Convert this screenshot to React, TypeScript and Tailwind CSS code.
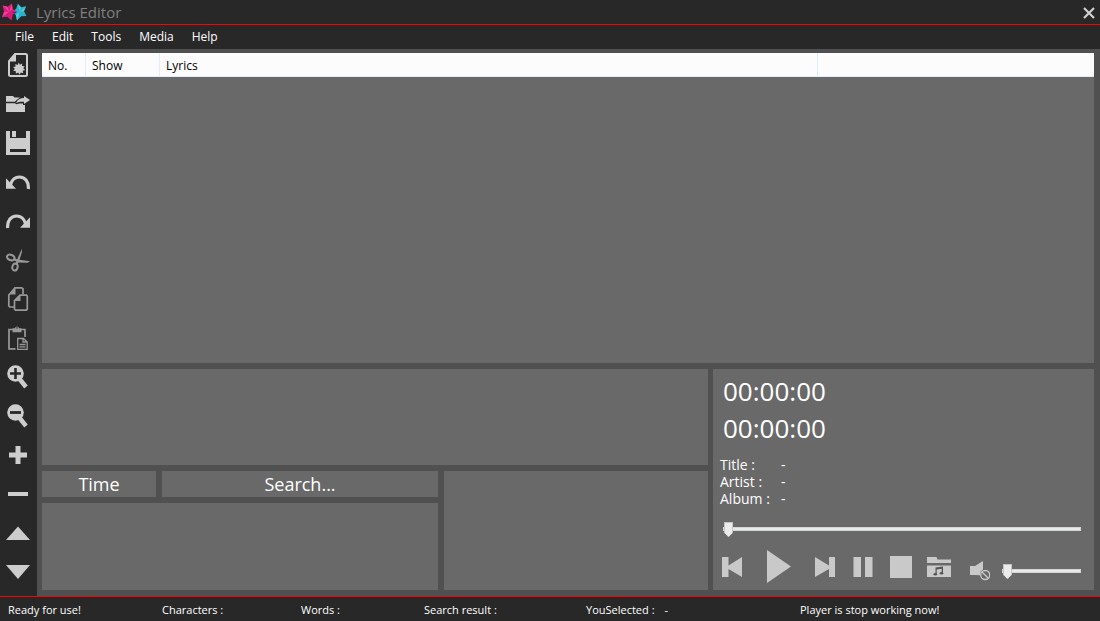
import { useState } from 'react';
import type { ReactNode } from 'react';

const menus = ['File', 'Edit', 'Tools', 'Media', 'Help'];

const NewIcon = () => (
  <>
    <path d="M9 1h10.500A1.500 1.500 0 0 1 21 2.500v19a1.500 1.500 0 0 1-1.500 1.500h-15A1.500 1.500 0 0 1 3 21.500V8z" fill="none" stroke="currentColor" strokeWidth="2" />
    <path d="M10 0v8.500H2.500z" />
    <path d="M12.800 9.500l1.100 2.200 2.300-1.300-.2 2.600 2.800.2-1.600 2.100 2 1.700-2.500.8.6 2.500-2.500-.8-1.200 2.200-1.500-2.100-2.300 1.100.1-2.500-2.700-.4 1.700-1.900-1.800-1.900 2.600-.5-.5-2.600 2.500 1z" />
  </>
);

const OpenIcon = () => (
  <>
    <path d="M0 4h7l1.500 1.500h5.500L10 8.500 9 9.800H0z" />
    <path d="M18 4l6 4-6 4v-2.200c-3.500-.3-5.500.2-8 1.200 1.500-3.500 4-4.800 8-5z" />
    <path d="M0 11.200h9l1.500 1 3-.8 3.500.1V13h2v7H0z" />
  </>
);

const SaveIcon = () => (
  <path fillRule="evenodd" d="M0 0h4v7h16V0h4v24H0zM6 0h4v6H6zM4 18v3h16v-3z" />
);

const UndoIcon = () => (
  <>
    <path d="M4.500 14.500C6 9.500 9.500 7 13.500 7c5.500 0 9.500 4.500 8.800 12" fill="none" stroke="currentColor" strokeWidth="3.200" />
    <path d="M0 8.200L0 18.800h10z" />
  </>
);

const RedoIcon = () => (
  <>
    <path d="M19.500 14.500C18 9.500 14.500 7 10.500 7 5 7 1 11.500 1.700 19" fill="none" stroke="currentColor" strokeWidth="3.200" />
    <path d="M24 8.200v10.600H14z" />
  </>
);

const CutIcon = () => (
  <>
    <g fill="none" stroke="currentColor" strokeWidth="2">
      <ellipse cx="4.800" cy="9.500" rx="3.900" ry="2.700" transform="rotate(20 4.800 9.500)" />
      <ellipse cx="9" cy="19" rx="2.600" ry="3.600" transform="rotate(15 9 19)" />
    </g>
    <path d="M15.900.8v3.500L13.300 12.300l-2.300 5-1.800-.6 2-5.500z" />
    <path d="M7.500 10.200l4.500 1.200 12 1.900-2.500 1.500L12 14.600l-5-2.800z" />
  </>
);

const CopyIcon = () => (
  <>
    <g fill="none" stroke="currentColor" strokeWidth="1.700">
      <path d="M8 20H3.800L2.800 19V8L9 .8h6.500l1.500 1v5.400" />
      <path d="M14 8.200h6.500l.8 1v13l-1 1H9.500l-1-1v-8.500z" />
    </g>
    <path d="M9.500.5v7H2.800zM14.500 8v6H8.300z" />
  </>
);

const PasteIcon = () => (
  <>
    <path d="M9.500 22.800H3V3.500h16V11" fill="none" stroke="currentColor" strokeWidth="1.700" />
    <path fillRule="evenodd" d="M6.500 2.200h2.300a2.300 2.300 0 0 1 4.400 0h2.300V6.200h-9zM11 1.200a.8.8 0 1 0 0 1.600.8.8 0 0 0 0-1.600" />
    <path d="M11.700 12.500h5.800l3.700 3.500v7.300h-9.500zM17 12.500V16h4M13.500 18.500h6M13.500 20.800h6" fill="none" stroke="currentColor" strokeWidth="1.300" />
  </>
);

const ZoomInIcon = () => (
  <>
    <path d="M12 12l8 10" stroke="currentColor" strokeWidth="4.500" />
    <circle cx="9.500" cy="8.500" r="8.300" />
    <path d="M4 8.500h11M9.500 3v11" stroke="#282828" strokeWidth="2.600" />
  </>
);

const ZoomOutIcon = () => (
  <>
    <path d="M12 12l8 10" stroke="currentColor" strokeWidth="4.500" />
    <circle cx="9.500" cy="8.500" r="8.300" />
    <path d="M4 8.500h11" stroke="#282828" strokeWidth="2.800" />
  </>
);

const tools: { label: string; icon: ReactNode; muted?: boolean }[] = [
  { label: 'New', icon: <NewIcon /> },
  { label: 'Open', icon: <OpenIcon /> },
  { label: 'Save', icon: <SaveIcon /> },
  { label: 'Undo', icon: <UndoIcon /> },
  { label: 'Redo', icon: <RedoIcon /> },
  { label: 'Cut', icon: <CutIcon />, muted: true },
  { label: 'Copy', icon: <CopyIcon />, muted: true },
  { label: 'Paste', icon: <PasteIcon />, muted: true },
  { label: 'Zoom in', icon: <ZoomInIcon /> },
  { label: 'Zoom out', icon: <ZoomOutIcon /> },
  { label: 'Add line', icon: <path d="M9.500 3h5v6.500H21v5h-6.500V21h-5v-6.500H3v-5h6.500z" /> },
  { label: 'Remove line', icon: <path d="M2 10h20v4H2z" /> },
  { label: 'Move up', icon: <path d="M12 5.500L24 19H0z" /> },
  { label: 'Move down', icon: <path d="M0 5h24L12 19z" /> },
];

const Logo = () => (
  <svg viewBox="0 0 26 20" className="h-5 w-[26px]" aria-hidden="true">
    <path d="M16.800 1.800L20 5.200l5-1L23 9.300l2.500 4.700-5.200.2L16 18.500 14.800 13 10 10l5-3z" fill="#28b2cc" />
    <path d="M16.800 1.800L20 5.200l-1.200 4.500zM25 4.200L23 9.300l-4.200.4zM16 18.500L14.800 13l4-3.300z" fill="#6adcea" opacity=".6" />
    <path d="M1.500 3.500l5 1.300 4.300-3.300.9 5.500L16 9.700l-4.200 2.600-1.300 6.200-4.200-3.700-5.300.4L3 9.800z" fill="#dd1a7c" />
    <path d="M1.500 3.500l5 1.300L8 9.800zM10.800 1.500l.9 5.500L8 9.800zM1 15.200L3 9.800h5z" fill="#f860a8" opacity=".6" />
    <path d="M11.500 10.500l2.500-.3 2-.5-2.500 2.200z" fill="#54266e" />
  </svg>
);

const TitleBar = () => (
  <header className="flex h-[25px] items-center border-b border-[#f00] pl-px pr-[5px]">
    <Logo />
    <h1 className="ml-[9px] flex-1 text-[15px] leading-6 text-[#808080]">Lyrics Editor</h1>
    <button type="button" aria-label="Close" className="pt-px text-[#d0d0d0]">
      <svg viewBox="0 0 12 12" className="h-3 w-3">
        <path d="M1 1l10 10M11 1L1 11" stroke="currentColor" strokeWidth="2.200" />
      </svg>
    </button>
  </header>
);

const MenuBar = () => (
  <nav className="flex h-6 items-center gap-[18px] pl-[15px] text-xs">
    {menus.map((menu) => (
      <button key={menu} type="button">{menu}</button>
    ))}
  </nav>
);

const Toolbar = () => (
  <aside className="flex w-[37px] shrink-0 flex-col items-start gap-[15px] bg-[#282828] pl-1.5 pt-1">
    {tools.map((tool) => (
      <button
        key={tool.label}
        type="button"
        aria-label={tool.label}
        className={tool.muted ? 'text-[#989898]' : 'text-[#cdcdcd]'}
      >
        <svg viewBox="0 0 24 24" fill="currentColor" className="h-6 w-6">{tool.icon}</svg>
      </button>
    ))}
  </aside>
);

const LyricsTable = () => (
  <section className="min-h-[200px] flex-1 bg-[#696969]">
    <table className="w-full table-fixed border-separate border-spacing-0 bg-[#fcfcfc] text-left text-xs text-black">
      <thead>
        <tr className="h-6">
          <th className="w-[44px] border-b border-r border-[#e3ecfa] p-0 pl-1.5 pt-0.5 font-normal">No.</th>
          <th className="w-[74px] border-b border-r border-[#e3ecfa] p-0 pl-1.5 pt-0.5 font-normal">Show</th>
          <th className="w-[658px] border-b border-r border-[#e3ecfa] p-0 pl-1.5 pt-0.5 font-normal">Lyrics</th>
          <th aria-label="Notes" className="border-b border-[#e3ecfa] p-0" />
        </tr>
      </thead>
      <tbody />
    </table>
  </section>
);

const Slider = ({ label }: { label: string }) => {
  const [value, setValue] = useState(0);

  return (
    <input
      type="range"
      aria-label={label}
      value={value}
      onChange={(e) => setValue(Number(e.target.value))}
      className="block h-4 w-full min-w-0 appearance-none bg-transparent [&::-webkit-slider-runnable-track]:h-1 [&::-webkit-slider-runnable-track]:border [&::-webkit-slider-runnable-track]:border-[#d6d6d6] [&::-webkit-slider-runnable-track]:bg-[#e7eaea] [&::-webkit-slider-thumb]:-mt-1.5 [&::-webkit-slider-thumb]:h-[15px] [&::-webkit-slider-thumb]:w-[9px] [&::-webkit-slider-thumb]:appearance-none [&::-webkit-slider-thumb]:border [&::-webkit-slider-thumb]:border-[#c4c4c4] [&::-webkit-slider-thumb]:bg-[#ebebeb] [&::-webkit-slider-thumb]:[clip-path:polygon(0_0,100%_0,100%_70%,50%_100%,0_70%)]"
    />
  );
};

const Player = () => (
  <section className="w-[381px] shrink-0 bg-[#696969] pr-[13px] text-white">
    <div className="pl-2.5 pt-1 text-[26px] leading-[37px]">
      <p>00:00:00</p>
      <p>00:00:00</p>
    </div>

    {/* Track info */}
    <dl className="mt-[9px] grid grid-cols-[61px_1fr] pl-[7px] text-sm leading-[17px]">
      <dt>Title :</dt>
      <dd>-</dd>
      <dt>Artist :</dt>
      <dd>-</dd>
      <dt>Album :</dt>
      <dd>-</dd>
    </dl>

    <div className="mt-3.5 pl-2.5">
      <Slider label="Position" />
    </div>

    {/* Playback controls */}
    <div className="mt-[13px] flex items-center pl-[9px] text-[#c9c9c9]">
      <button type="button" aria-label="Previous" className="mr-[25px]">
        <svg viewBox="0 0 20 20" fill="currentColor" className="h-5 w-5">
          <path d="M0 0h6.500v8.500L20 0v20L6.500 12v8H0z" />
        </svg>
      </button>
      <button type="button" aria-label="Play" className="mr-6">
        <svg viewBox="0 0 24 34" fill="currentColor" className="h-[34px] w-6">
          <path d="M0 0l24 16.500L0 33z" />
        </svg>
      </button>
      <button type="button" aria-label="Next" className="mr-[18px]">
        <svg viewBox="0 0 20 20" fill="currentColor" className="h-5 w-5">
          <path d="M20 0h-6v8.500L0 0v20l14-8v8h6z" />
        </svg>
      </button>
      <button type="button" aria-label="Pause" className="mr-[17px]">
        <svg viewBox="0 0 20 20" fill="currentColor" className="h-5 w-5">
          <path d="M.5 0H8v20H.5zM12 0h7.500v20H12z" />
        </svg>
      </button>
      <button type="button" aria-label="Stop" className="mr-[15px] h-[22px] w-[22px] bg-[#c9c9c9]" />
      <button type="button" aria-label="Open media" className="mr-[19px]">
        <svg viewBox="0 0 24 20" fill="currentColor" className="h-5 w-6">
          <path d="M0 0h9.500l1 2.500H24V6H0z" />
          <path d="M0 8.500h24V20H0z" />
          <g fill="#555">
            <path d="M8.500 10.500L16 9.500v7h-1.300v-4.800l-5 .8v5H8.500z" />
            <ellipse cx="8.300" cy="17.300" rx="1.800" ry="1.300" />
            <ellipse cx="14.500" cy="16.300" rx="1.800" ry="1.300" />
          </g>
        </svg>
      </button>
      <div className="flex flex-1 items-center gap-3 pt-2">
        <button type="button" aria-label="Mute" className="shrink-0">
          <svg viewBox="0 0 20 20" className="h-5 w-5">
            <path d="M0 5h5l8-5v8.500c-2.500 1.300-3.300 3.500-2.800 5.800L5 14H0z" fill="currentColor" />
            <circle cx="15.200" cy="14" r="4.500" fill="none" stroke="currentColor" strokeWidth="1.300" />
            <path d="M12 11l6.300 6.200" stroke="currentColor" strokeWidth="1.300" />
          </svg>
        </button>
        <Slider label="Volume" />
      </div>
    </div>
  </section>
);

const EditorPanels = () => (
  <section className="flex min-w-0 flex-1 flex-col gap-1.5">
    <textarea aria-label="Lyrics text" className="h-24 resize-none bg-[#696969] p-1 outline-none" />
    <div className="flex flex-1 gap-1.5">
      <div className="flex flex-[3] flex-col gap-1.5">
        <div className="flex h-[26px] gap-1.5 text-lg leading-[26px]">
          <button type="button" className="w-[114px] bg-[#696969]">Time</button>
          <input
            type="text"
            aria-label="Search"
            placeholder="Search..."
            className="min-w-0 flex-1 bg-[#696969] text-center outline-none placeholder:text-white"
          />
        </div>
        <div className="flex-1 bg-[#696969]" />
      </div>
      <div className="flex-[2] bg-[#696969]" />
    </div>
  </section>
);

const StatusBar = () => (
  <footer className="grid h-[25px] grid-cols-[154fr_139fr_123fr_162fr_214fr_300fr] items-center whitespace-nowrap border-t border-[#f00] pl-2 pt-0.5 text-[11px]">
    <span>Ready for use!</span>
    <span>Characters :</span>
    <span>Words :</span>
    <span>Search result :</span>
    <span className="flex gap-2.5">
      <span>YouSelected :</span>
      <span>-</span>
    </span>
    <span>Player is stop working now!</span>
  </footer>
);

const App = () => (
  <div className="flex min-h-screen flex-col bg-[#282828] font-['Open_Sans','Noto_Sans',sans-serif] text-white">
    <TitleBar />
    <MenuBar />
    <div className="flex flex-1">
      <Toolbar />
      <main className="flex min-w-0 flex-1 flex-col gap-1.5 bg-[#505050] pb-1.5 pl-[5px] pr-1.5 pt-1">
        <LyricsTable />
        <div className="flex min-h-[221px] gap-[5px]">
          <EditorPanels />
          <Player />
        </div>
      </main>
    </div>
    <StatusBar />
  </div>
);

export default App;
